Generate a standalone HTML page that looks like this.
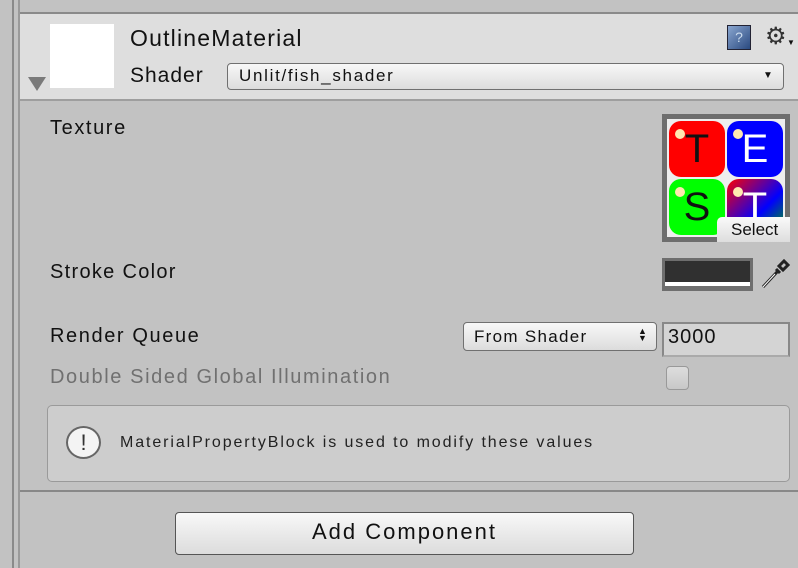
<!DOCTYPE html>
<html><head><style>
*{margin:0;padding:0;box-sizing:border-box}
body{width:798px;height:568px;background:#c2c2c2;position:relative;overflow:hidden;font-family:"Liberation Sans",sans-serif;color:#111}
.a{position:absolute}
.t{position:absolute;white-space:nowrap}
.btn{position:absolute;border:1px solid #707070;border-radius:4px;background:linear-gradient(#f8f8f8,#dcdcdc)}
</style></head><body>
<div class="a" style="left:12px;top:0;width:2px;height:568px;background:#8a8a8a"></div>
<div class="a" style="left:18px;top:0;width:2px;height:568px;background:#9a9a9a"></div>
<div class="a" style="left:20px;top:12px;width:778px;height:89px;background:#dedede;border-top:2px solid #8a8a8a;border-bottom:2px solid #9e9e9e"></div>
<div class="a" style="left:50px;top:24px;width:64px;height:64px;background:#fff"></div>
<div class="a" style="left:28px;top:77px;width:0;height:0;border-left:9px solid transparent;border-right:9px solid transparent;border-top:14px solid #7a7a7a"></div>
<div class="t" style="left:130px;top:25px;font-size:23px;letter-spacing:1.2px">OutlineMaterial</div>
<div class="t" style="left:130px;top:64px;font-size:21px;letter-spacing:1px">Shader</div>
<div class="btn" style="left:227px;top:63px;width:557px;height:27px"></div>
<div class="t" style="left:239px;top:66px;font-size:17px;letter-spacing:1.7px">Unlit/fish_shader</div>
<div class="t" style="left:763px;top:70px;font-size:10px">▼</div>
<div class="a" style="left:727px;top:25px;width:24px;height:25px;background:linear-gradient(135deg,#8aa6d0,#2a4a80);border:1px solid #223;color:#cde;font-size:14px;text-align:center;line-height:23px">?</div>
<div class="t" style="left:765px;top:22px;font-size:24px;color:#333">⚙</div>
<div class="t" style="left:787px;top:38px;font-size:8px">▼</div>

<div class="t" style="left:50px;top:117px;font-size:20px;letter-spacing:1.6px">Texture</div>
<div class="a" style="left:662px;top:114px;width:128px;height:128px;background:#6e6e6e;padding:5px">
 <div style="position:relative;width:118px;height:118px;background:#eee">
  <div class="a" style="left:2px;top:2px;width:56px;height:56px;background:#f00;border-radius:12px;font-size:40px;line-height:56px;text-align:center;color:#111">T</div>
  <div class="a" style="left:60px;top:2px;width:56px;height:56px;background:#00f;border-radius:12px;font-size:40px;line-height:56px;text-align:center;color:#fff">E</div>
  <div class="a" style="left:2px;top:60px;width:56px;height:56px;background:#0f0;border-radius:12px;font-size:40px;line-height:56px;text-align:center;color:#111">S</div>
  <div class="a" style="left:60px;top:60px;width:56px;height:56px;background:linear-gradient(135deg,#f00,#00f 60%,#0a0);border-radius:12px;font-size:40px;line-height:56px;text-align:center;color:#fff">T</div>
  <div class="a" style="left:8px;top:10px;width:10px;height:10px;border-radius:5px;background:#ffe8b0"></div>
  <div class="a" style="left:66px;top:10px;width:10px;height:10px;border-radius:5px;background:#ffe8b0"></div>
  <div class="a" style="left:8px;top:68px;width:10px;height:10px;border-radius:5px;background:#ffe8b0"></div>
  <div class="a" style="left:66px;top:68px;width:10px;height:10px;border-radius:5px;background:#ffe8b0"></div>
 </div>
 <div class="a" style="left:55px;top:103px;width:73px;height:25px;background:linear-gradient(#fafafa,#ddd);border-top-left-radius:5px;font-size:17px;padding-left:14px;line-height:25px">Select</div>
</div>

<div class="t" style="left:50px;top:261px;font-size:20px;letter-spacing:1.3px">Stroke Color</div>
<div class="a" style="left:662px;top:258px;width:91px;height:33px;background:#6e6e6e;padding:3px"><div style="height:21px;background:#303030"></div><div style="height:4px;background:#fff"></div></div>
<svg class="a" style="left:759px;top:258px" width="32" height="32" viewBox="0 0 32 32"><path d="M4 29 L18 14 M20 8 L25 3 L29 7 L24 12 Z M17 11 L21 15" stroke="#222" stroke-width="3" fill="none"/><path d="M4 29 L16 16" stroke="#fff" stroke-width="1"/></svg>

<div class="t" style="left:50px;top:325px;font-size:20px;letter-spacing:1.6px">Render Queue</div>
<div class="btn" style="left:463px;top:322px;width:194px;height:29px"></div>
<div class="t" style="left:474px;top:327px;font-size:17px;letter-spacing:1.3px">From Shader</div>
<div class="t" style="left:638px;top:328px;font-size:9px;line-height:7px">▲<br>▼</div>
<div class="a" style="left:662px;top:322px;width:128px;height:35px;background:#d4d4d4;border:2px solid #888;border-bottom-color:#aaa"></div>
<div class="t" style="left:668px;top:326px;font-size:20px;letter-spacing:1px">3000</div>
<div class="t" style="left:50px;top:366px;font-size:20px;color:#707070;letter-spacing:1.6px">Double Sided Global Illumination</div>
<div class="a" style="left:666px;top:366px;width:23px;height:24px;border:1px solid #999;border-radius:4px;background:linear-gradient(#ddd,#c8c8c8)"></div>

<div class="a" style="left:47px;top:405px;width:743px;height:77px;border:1px solid #9a9a9a;border-radius:5px;background:#cdcdcd"></div>
<div class="a" style="left:66px;top:426px;width:35px;height:33px;border:2px solid #666;border-radius:50%;background:#f4f4f4;text-align:center;font-size:22px;line-height:29px;color:#333">!</div>
<div class="t" style="left:120px;top:434px;font-size:16px;color:#222;letter-spacing:1.9px">MaterialPropertyBlock is used to modify these values</div>

<div class="a" style="left:20px;top:490px;width:778px;height:2px;background:#888"></div>
<div class="btn" style="left:175px;top:512px;width:459px;height:43px;border-color:#555"></div>
<div class="t" style="left:175px;top:519px;width:459px;text-align:center;font-size:22px;letter-spacing:2px">Add Component</div>
</body></html>
